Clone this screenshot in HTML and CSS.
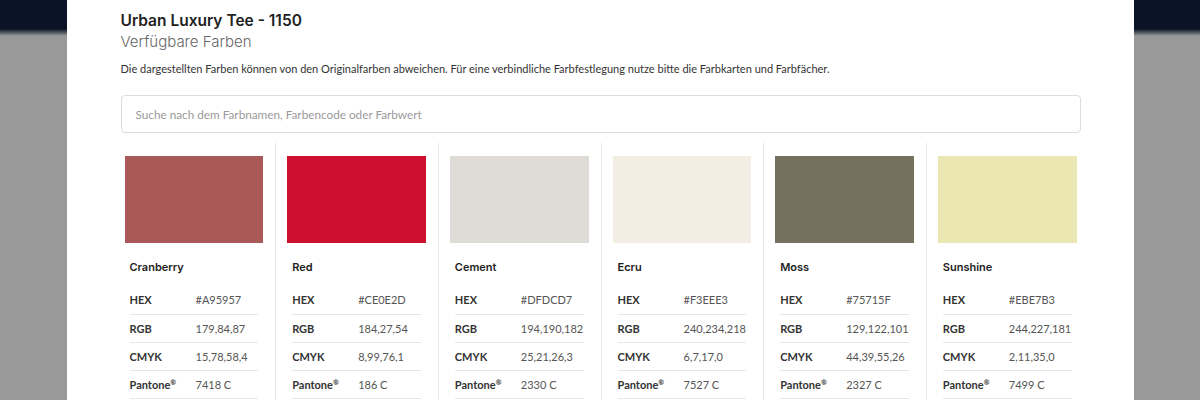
FILE: index.html
```html
<!DOCTYPE html>
<html lang="de">
<head>
    <meta charset="UTF-8">
    <meta name="viewport" content="width=device-width, initial-scale=1.0">
    <title>Urban Luxury Tee - 1150 | Farben</title>
    <link rel="stylesheet" href="styles.css">
</head>
<body>
    <div class="modal">
        <h2 class="titel">Urban Luxury Tee - 1150</h2>
        <h3 class="untertitel">Verfügbare Farben</h3>
        <p class="hinweis">Die dargestellten Farben können von den Originalfarben abweichen. Für eine verbindliche Farbfestlegung nutze bitte die Farbkarten und Farbfächer.</p>

        <input type="text" class="suche" placeholder="Suche nach dem Farbnamen, Farbencode oder Farbwert">

        <div class="farben">
            <div class="farbe">
                <div class="feld" style="background-color: #a95957;"></div>
                <h4 class="name">Cranberry</h4>
                <table class="werte">
                    <tr><th>HEX</th><td>#A95957</td></tr>
                    <tr><th>RGB</th><td>179,84,87</td></tr>
                    <tr><th>CMYK</th><td>15,78,58,4</td></tr>
                    <tr><th>Pantone<sup>®</sup></th><td>7418 C</td></tr>
                </table>
            </div>
            <div class="farbe">
                <div class="feld" style="background-color: #ce0e2d;"></div>
                <h4 class="name">Red</h4>
                <table class="werte">
                    <tr><th>HEX</th><td>#CE0E2D</td></tr>
                    <tr><th>RGB</th><td>184,27,54</td></tr>
                    <tr><th>CMYK</th><td>8,99,76,1</td></tr>
                    <tr><th>Pantone<sup>®</sup></th><td>186 C</td></tr>
                </table>
            </div>
            <div class="farbe">
                <div class="feld" style="background-color: #dfdcd7;"></div>
                <h4 class="name">Cement</h4>
                <table class="werte">
                    <tr><th>HEX</th><td>#DFDCD7</td></tr>
                    <tr><th>RGB</th><td>194,190,182</td></tr>
                    <tr><th>CMYK</th><td>25,21,26,3</td></tr>
                    <tr><th>Pantone<sup>®</sup></th><td>2330 C</td></tr>
                </table>
            </div>
            <div class="farbe">
                <div class="feld" style="background-color: #f3eee3;"></div>
                <h4 class="name">Ecru</h4>
                <table class="werte">
                    <tr><th>HEX</th><td>#F3EEE3</td></tr>
                    <tr><th>RGB</th><td>240,234,218</td></tr>
                    <tr><th>CMYK</th><td>6,7,17,0</td></tr>
                    <tr><th>Pantone<sup>®</sup></th><td>7527 C</td></tr>
                </table>
            </div>
            <div class="farbe">
                <div class="feld" style="background-color: #75715f;"></div>
                <h4 class="name">Moss</h4>
                <table class="werte">
                    <tr><th>HEX</th><td>#75715F</td></tr>
                    <tr><th>RGB</th><td>129,122,101</td></tr>
                    <tr><th>CMYK</th><td>44,39,55,26</td></tr>
                    <tr><th>Pantone<sup>®</sup></th><td>2327 C</td></tr>
                </table>
            </div>
            <div class="farbe">
                <div class="feld" style="background-color: #ebe7b3;"></div>
                <h4 class="name">Sunshine</h4>
                <table class="werte">
                    <tr><th>HEX</th><td>#EBE7B3</td></tr>
                    <tr><th>RGB</th><td>244,227,181</td></tr>
                    <tr><th>CMYK</th><td>2,11,35,0</td></tr>
                    <tr><th>Pantone<sup>®</sup></th><td>7499 C</td></tr>
                </table>
            </div>
        </div>
    </div>
</body>
</html>
```

FILE: styles.css
```css
* {
    box-sizing: border-box;
    padding: 0;
    margin: 0;
}

html,
body {
    height: 100%;
    width: 100%;
}

/* dunkle Kopfleiste der Seite hinter dem grauen Overlay */
body {
    background: linear-gradient(#0b1427 0, #0b1427 29px, #999999 36px, #999999 100%);
    font-family: "Lato", "Noto Sans", sans-serif;
    overflow: hidden;
}

.modal {
    background-color: #fff;
    width: 1067px;
    height: 100%;
    margin: 0 auto;
    padding: 11px 53px 0 54px;
}

.titel {
    font-family: "Inter", sans-serif;
    font-size: 15.5px;
    font-weight: 600;
    color: #222;
    line-height: 20px;
}

.untertitel {
    font-family: "Inter", sans-serif;
    font-size: 15px;
    font-weight: 300;
    color: #666;
    line-height: 20px;
    margin-top: 1px;
}

.hinweis {
    font-size: 11px;
    color: #333;
    line-height: 16px;
    margin-top: 9px;
}

.suche {
    display: block;
    width: 100%;
    height: 38px;
    margin-top: 18px;
    padding: 0 14px;
    border: 1px solid #dcdcdc;
    border-radius: 4px;
    font-family: "Lato", "Noto Sans", sans-serif;
    font-size: 11.75px;
    color: #333;
    outline: none;
}

.suche::placeholder {
    color: #9a9a9a;
}

.farben {
    display: grid;
    grid-template-columns: repeat(6, 1fr);
    margin: 10px -8px 0;
}

.farbe {
    padding: 13px 12px 0;
    min-height: 260px;
}

.farbe + .farbe {
    border-left: 1px solid #e6e6e6;
    padding-left: 11px;
}

.feld {
    height: 87px;
}

.name {
    font-family: "Inter", sans-serif;
    font-size: 11px;
    font-weight: 600;
    color: #222;
    line-height: 14px;
    margin: 17px 5px 12px;
}

.werte {
    width: calc(100% - 10px);
    margin: 0 5px;
    border-collapse: collapse;
    font-size: 11px;
}

.werte tr {
    height: 28px;
    border-bottom: 1px solid #e6e6e6;
}

.werte th {
    width: 66px;
    text-align: left;
    font-weight: 700;
    color: #333;
}

.werte td {
    color: #555;
}

.werte sup {
    font-size: 7px;
    vertical-align: 4px;
}
```
